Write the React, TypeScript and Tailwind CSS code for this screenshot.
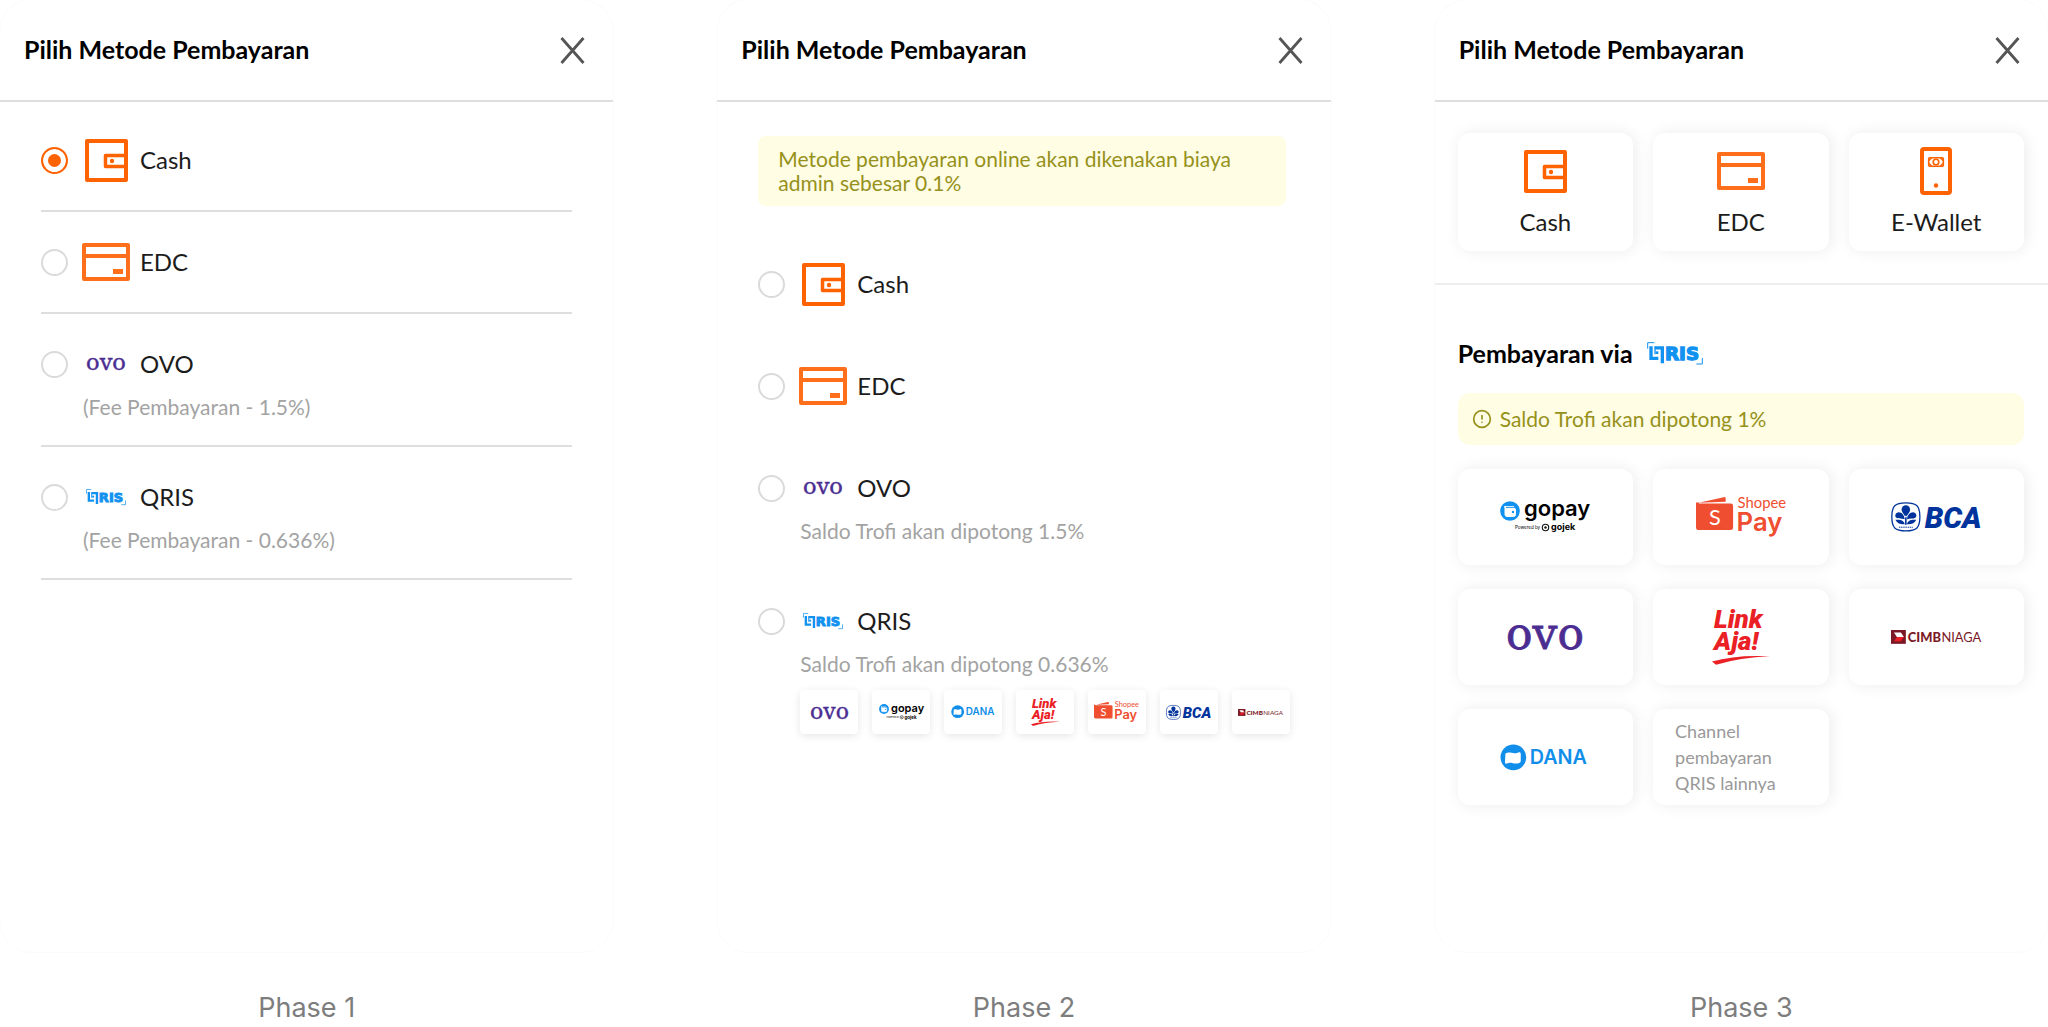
import type { ReactNode } from "react";
import { CircleAlert } from "lucide-react";

type LogoProps = { className?: string };

function CashIcon() {
  return (
    <svg className="h-[43px] w-[43px]" viewBox="0 0 43 43" fill="none" stroke="#ff6200">
      <rect x="2" y="2" width="39" height="39" strokeWidth="4" strokeLinejoin="round" />
      <path d="M41 16.5H20.5v11H41" strokeWidth="3.5" strokeLinejoin="round" />
      <circle cx="27" cy="22" r="2.2" fill="#ff6200" stroke="none" />
    </svg>
  );
}

function CardIcon() {
  return (
    <svg className="h-[38px] w-12" viewBox="0 0 48 38" fill="none" stroke="#ff6e1a">
      <rect x="2" y="2" width="44" height="34" strokeWidth="4" strokeLinejoin="round" />
      <path d="M2 13h44" strokeWidth="4" />
      <path d="M31 28.500h10" strokeWidth="5" />
    </svg>
  );
}

function PhoneIcon() {
  return (
    <svg className="h-12 w-8" viewBox="0 0 32 48" fill="none" stroke="#ff6200">
      <rect x="2" y="2" width="28" height="44" rx="2" strokeWidth="4" />
      <rect x="8.700" y="10.700" width="14.600" height="8.600" rx="1" strokeWidth="1.600" />
      <circle cx="16" cy="15" r="2.800" strokeWidth="1.600" />
      <path d="M9 13.500l2.500-2.500M9 16.500l2.500 2.500M23 13.500l-2.500-2.500M23 16.500l-2.500 2.500" strokeWidth="1.500" />
      <circle cx="16" cy="38.500" r="2.200" fill="#ff6200" stroke="none" />
    </svg>
  );
}

function OvoLogo({ className }: LogoProps) {
  return (
    <svg className={`overflow-visible ${className}`} viewBox="0 0 78 26" fill="#4b2d92" role="img" aria-label="OVO">
      <text x="39" y="25" textAnchor="middle" fontFamily="DejaVu Serif, serif" fontSize="44" stroke="#4b2d92" strokeWidth="0.800">ovo</text>
    </svg>
  );
}

function QrisLogo({ className }: LogoProps) {
  return (
    <svg className={`overflow-visible ${className}`} viewBox="0 0 168 68" fill="none" stroke="#1191f0" role="img" aria-label="QRIS">
      <path d="M2 20V2h20M148 66h18V48" strokeWidth="3" />
      <path d="M12 13v36h22M24 17.500h22v46" strokeWidth="10" />
      <path d="M24 13v24" strokeWidth="4" />
      <rect x="26" y="28" width="8" height="8" fill="#1191f0" stroke="none" />
      <text x="54" y="53" fontFamily="DejaVu Sans, sans-serif" fontWeight="700" fontSize="55" fill="#1191f0" stroke="#1191f0" strokeWidth="4">RIS</text>
    </svg>
  );
}

function GopayLogo({ className }: LogoProps) {
  return (
    <svg className={`overflow-visible ${className}`} viewBox="0 0 90 36" role="img" aria-label="gopay powered by gojek">
      <circle cx="10" cy="12" r="9.800" fill="#1191f0" />
      <path d="M5 7.500h9M5 7v8.500a2 2 0 0 0 2 2h6.500a2 2 0 0 0 2-2V11a2 2 0 0 0-2-2H5z" fill="#fff" stroke="#fff" />
      <path d="M6 8.300h8" stroke="#1191f0" strokeWidth="0.800" />
      <circle cx="13" cy="13" r="1.200" fill="#1191f0" />
      <g fontFamily="Inter, sans-serif">
        <text x="24" y="17" fontSize="22" fontWeight="600">gopay</text>
        <text x="15" y="30" fontSize="4.500">Powered by</text>
        <text x="51" y="31" fontSize="9" fontWeight="700">gojek</text>
      </g>
      <circle cx="45.500" cy="28.500" r="3.200" fill="none" stroke="#111" strokeWidth="1.100" />
      <circle cx="45.500" cy="28.500" r="1.200" fill="#111" />
    </svg>
  );
}

function ShopeePayLogo({ className }: LogoProps) {
  return (
    <svg className={`overflow-visible ${className}`} viewBox="0 0 91 40" fill="#f04e30" role="img" aria-label="Shopee Pay">
      <path d="M0 5.500h4l24-5.300q2-.400 2 1.300v3.200L3 5.700v.800h32q2.500 0 2.500 2.500v22q0 2.500-2.500 2.500H3q-3 0-3-3z" />
      <text x="19" y="28" textAnchor="middle" fontFamily="Lato, sans-serif" fontSize="22" fill="#fff">S</text>
      <text x="42" y="11" fontFamily="Lato, sans-serif" fontSize="15">Shopee</text>
      <text x="41" y="34" fontFamily="Inter, sans-serif" fontWeight="600" fontSize="26">Pay</text>
    </svg>
  );
}

function BcaLogo({ className }: LogoProps) {
  return (
    <svg className={`overflow-visible ${className}`} viewBox="0 0 91 30" fill="#00339c" role="img" aria-label="BCA">
      <path d="M15 .800C26 .800 29.200 4 29.200 15S26 29.200 15 29.200.800 26 .800 15 4 .800 15 .800z" fill="none" stroke="#00339c" strokeWidth="1.300" />
      <circle cx="15" cy="7.500" r="4.300" />
      <path d="M11.200 9.500L15 16l3.800-6.500zM14.200 14h1.600v9h-1.600z" />
      <path d="M13.800 17.500C13.500 13 10.500 10 7 10.500c-2.800.500-3.500 4-1.500 5.500 2 1.300 5 .500 8.300 1.500z" />
      <path d="M16.200 17.500c.300-4.500 3.300-7.500 6.800-7 2.800.500 3.500 4 1.500 5.500-2 1.300-5 .500-8.300 1.500z" />
      <path d="M14 22.500c-1-4-4.500-5-9.500-4.500 1.500 3.500 5 5 9.500 4.500zM16 22.500c1-4 4.500-5 9.500-4.500-1.500 3.500-5 5-9.500 4.500z" />
      <path d="M8 25.500h14" stroke="#00339c" strokeDasharray="1.500 .700" />
      <text x="34" y="26" fontFamily="Roboto, sans-serif" fontWeight="900" fontStyle="italic" fontSize="30">BCA</text>
    </svg>
  );
}

function LinkAjaLogo({ className }: LogoProps) {
  return (
    <svg className={`overflow-visible ${className}`} viewBox="0 0 58 56" fill="#ea2025" role="img" aria-label="LinkAja!">
      <g fontFamily="Roboto, sans-serif" fontWeight="900" fontStyle="italic" fontSize="26">
        <text x="2" y="19">Link</text>
        <text x="2" y="41">Aja!</text>
      </g>
      <path d="M0 52.500Q24 45.500 58 47.300 28 48.500 4 55.800z" />
    </svg>
  );
}

function CimbLogo({ className }: LogoProps) {
  return (
    <svg className={`overflow-visible ${className}`} viewBox="0 0 91 14" fill="#7b1a26" role="img" aria-label="CIMB Niaga">
      <path d="M0 0h15v14H0z" />
      <path d="M3 2.500h7l3 4.500H6z" fill="#fff" />
      <path d="M6 7h7l-3 4.500H3z" fill="#ec1c24" />
      <g fontFamily="Lato, sans-serif" fontSize="13">
        <text x="17" y="11.700" fontWeight="900">CIMB</text>
        <text x="51" y="11.700">NIAGA</text>
      </g>
    </svg>
  );
}

function DanaLogo({ className }: LogoProps) {
  return (
    <svg className={`overflow-visible ${className}`} viewBox="0 0 91 27" fill="#118eea" role="img" aria-label="DANA">
      <circle cx="13.500" cy="13.500" r="13" />
      <path d="M5.500 9.500c4.500-2.500 7.500 1.500 13-1 1.500-.500 2.500 0 2.500 1.500v7c0 1.200-.500 1.700-1.500 2.200-5 2-8-1.500-12.500.500-1.300.500-2 0-2-1.200z" fill="#fff" />
      <text x="30" y="20.500" fontFamily="Inter, sans-serif" fontWeight="600" fontSize="20">DANA</text>
    </svg>
  );
}

function Panel({ title, phase, children }: { title: string; phase: string; children: ReactNode }) {
  return (
    <div>
      <section className="min-h-[952px] rounded-[32px] ring-1 ring-[#fbfbfb]">
        <header className="flex h-[102px] items-center justify-between border-b-2 border-[#dedede] pr-[27px] pl-6">
          <h2 className="text-[25px] font-bold text-black">{title}</h2>
          <button type="button" aria-label="Tutup" className="cursor-pointer">
            <svg className="h-[27px] w-[27px]" viewBox="0 0 27 27" stroke="#555" strokeWidth="2.800">
              <path d="M2.500 1l22 25M24.500 1l-22 25" />
            </svg>
          </button>
        </header>
        {children}
      </section>
      <p className="mt-10 text-center font-[Inter,sans-serif] text-[27px] leading-8 text-[#7d7d7d]">{phase}</p>
    </div>
  );
}

type OptionProps = {
  group: string;
  label: string;
  icon: ReactNode;
  note?: string;
  divider?: boolean;
  checked?: boolean;
  children?: ReactNode;
};

function Option({ group, label, icon, note, divider, checked, children }: OptionProps) {
  return (
    <div className={`border-b-2 pt-7 ${note ? "pb-[26px]" : "pb-7"} ${divider ? "border-[#dedede]" : "border-transparent"}`}>
      <label className="flex h-11 cursor-pointer items-center text-[24px] text-[#1c1c1c]">
        <input
          type="radio"
          name={group}
          defaultChecked={checked}
          className="h-[27px] w-[27px] appearance-none rounded-full border-2 border-[#dadada] checked:border-[#ff6200] checked:bg-[#ff6200] checked:shadow-[inset_0_0_0_5px_white]"
        />
        <span className="ml-[14px] flex w-12 justify-center">{icon}</span>
        <span className="ml-[10px]">{label}</span>
      </label>
      {note && <p className="mt-[9px] pl-[42px] text-[21px] leading-6 text-[#a3a3a3]">{note}</p>}
      {children}
    </div>
  );
}

function Tile({ children }: { children: ReactNode }) {
  return (
    <button type="button" className="flex h-24 cursor-pointer items-center justify-center rounded-xl bg-white shadow-[2px_0_16px_rgba(0,0,0,0.08)]">
      {children}
    </button>
  );
}

function MethodTile({ icon, label }: { icon: ReactNode; label: string }) {
  return (
    <button type="button" className="flex h-[118px] cursor-pointer flex-col items-center rounded-xl bg-white pt-[14px] text-[24px] text-[#1c1c1c] shadow-[2px_0_16px_rgba(0,0,0,0.08)]">
      <span className="flex h-12 items-center">{icon}</span>
      <span className="mt-[11px] leading-8">{label}</span>
    </button>
  );
}

const channels = [
  <OvoLogo className="w-[39px]" />,
  <GopayLogo className="w-[45px]" />,
  <DanaLogo className="w-[45px]" />,
  <LinkAjaLogo className="w-[29px]" />,
  <ShopeePayLogo className="w-[45px]" />,
  <BcaLogo className="w-[45px]" />,
  <CimbLogo className="w-[45px]" />,
];

export default function App() {
  return (
    <main className="grid min-h-screen grid-cols-3 gap-[104px] bg-white font-[Lato,sans-serif]">
      <Panel title="Pilih Metode Pembayaran" phase="Phase 1">
        <div className="px-[41px] pt-2">
          <Option group="phase1" label="Cash" icon={<CashIcon />} divider checked />
          <Option group="phase1" label="EDC" icon={<CardIcon />} divider />
          <Option group="phase1" label="OVO" icon={<OvoLogo className="w-10" />} note="(Fee Pembayaran - 1.5%)" divider />
          <Option group="phase1" label="QRIS" icon={<QrisLogo className="w-10" />} note="(Fee Pembayaran - 0.636%)" divider />
        </div>
      </Panel>

      <Panel title="Pilih Metode Pembayaran" phase="Phase 2">
        <div className="px-[41px] pt-[34px]">
          <p className="mr-1 mb-7 rounded-lg bg-[#fffde3] px-5 py-[11px] text-[21px] leading-6 text-[#96911b]">
            Metode pembayaran online akan dikenakan biaya admin sebesar 0.1%
          </p>
          <Option group="phase2" label="Cash" icon={<CashIcon />} />
          <Option group="phase2" label="EDC" icon={<CardIcon />} />
          <Option group="phase2" label="OVO" icon={<OvoLogo className="w-10" />} note="Saldo Trofi akan dipotong 1.5%" />
          <Option group="phase2" label="QRIS" icon={<QrisLogo className="w-10" />} note="Saldo Trofi akan dipotong 0.636%">
            <ul className="mt-[14px] flex gap-[14px] pl-[42px]">
              {channels.map((logo, i) => (
                <li key={i} className="flex h-11 flex-1 items-center justify-center rounded bg-white shadow-[0_2px_8px_rgba(0,0,0,0.1)]">
                  {logo}
                </li>
              ))}
            </ul>
          </Option>
        </div>
      </Panel>

      <Panel title="Pilih Metode Pembayaran" phase="Phase 3">
        <div className="grid grid-cols-3 gap-5 border-b-2 border-[#eee] pt-[31px] pr-6 pb-8 pl-[23px]">
          <MethodTile icon={<CashIcon />} label="Cash" />
          <MethodTile icon={<CardIcon />} label="EDC" />
          <MethodTile icon={<PhoneIcon />} label="E-Wallet" />
        </div>
        <div className="pt-[52px] pr-6 pl-[23px]">
          <h3 className="flex items-center gap-[14px] text-[25px] leading-8 font-bold text-black">
            Pembayaran via <QrisLogo className="w-14" />
          </h3>
          <p className="mt-6 flex h-[52px] items-center gap-2 rounded-xl bg-[#fffde3] px-[14px] text-[21px] text-[#96911b]">
            <CircleAlert size={20} strokeWidth={2} />
            Saldo Trofi akan dipotong 1%
          </p>
          <div className="mt-6 grid grid-cols-3 gap-x-5 gap-y-6">
            <Tile><GopayLogo className="w-[90px]" /></Tile>
            <Tile><ShopeePayLogo className="w-[90px]" /></Tile>
            <Tile><BcaLogo className="w-[90px]" /></Tile>
            <Tile><OvoLogo className="w-[78px]" /></Tile>
            <Tile><LinkAjaLogo className="w-[58px]" /></Tile>
            <Tile><CimbLogo className="w-[90px]" /></Tile>
            <Tile><DanaLogo className="w-[90px]" /></Tile>
            <button type="button" className="flex h-24 cursor-pointer items-center rounded-xl bg-white px-[22px] text-left text-[18px] leading-[26px] text-[#999] shadow-[2px_0_16px_rgba(0,0,0,0.08)]">
              Channel pembayaran QRIS lainnya
            </button>
          </div>
        </div>
      </Panel>
    </main>
  );
}
